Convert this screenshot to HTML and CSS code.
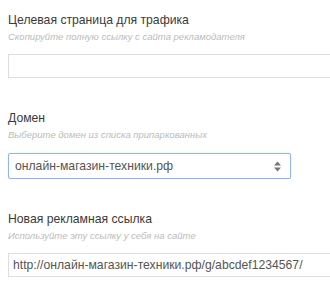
FILE: index.html
```html
<!DOCTYPE html>
<html lang="ru">
<head>
    <meta charset="UTF-8">
    <title>Новая рекламная ссылка</title>
    <link rel="stylesheet" href="styles.css">
</head>
<body>
    <div class="form">
        <div class="field">
            <p class="label">Целевая страница для трафика</p>
            <p class="hint">Скопируйте полную ссылку с сайта рекламодателя</p>
            <div class="input wide"></div>
        </div>
        <div class="field">
            <p class="label">Домен</p>
            <p class="hint">Выберите домен из списка припаркованных</p>
            <div class="select">
                <span>онлайн-магазин-техники.рф</span>
                <svg class="arrows" width="9" height="11" viewBox="0 0 9 11">
                    <path d="M4.5 0.5 L8 4.5 L1 4.5 Z" fill="#777"/>
                    <path d="M4.5 10.5 L8 6.5 L1 6.5 Z" fill="#777"/>
                </svg>
            </div>
        </div>
        <div class="field">
            <p class="label">Новая рекламная ссылка</p>
            <p class="hint">Используйте эту ссылку у себя на сайте</p>
            <div class="input wide">http://онлайн-магазин-техники.рф/g/abcdef1234567/</div>
        </div>
    </div>
</body>
</html>
```

FILE: styles.css
```css
html, body {
    margin: 0;
    background: #fff;
    overflow: hidden;
}
body {
    font-family: "Liberation Sans", Arial, sans-serif;
    color: #333;
}
.form {
    padding: 12px 0 0 8px;
}
.field {
    margin-bottom: 32px;
}
.field:last-child {
    margin-bottom: 0;
}
.label {
    margin: 0;
    font-size: 12.2px;
    line-height: 16px;
    color: #3a3a3a;
}
.hint {
    margin: 3px 0 0;
    font-size: 9.5px;
    line-height: 12px;
    font-style: italic;
    color: #bbb;
}
.input {
    box-sizing: border-box;
    margin-top: 11px;
    height: 24px;
    border: 1px solid #ddd;
    padding: 0 4px;
    font-size: 12.2px;
    line-height: 22px;
    color: #555;
    white-space: nowrap;
}
.input.wide {
    width: 322px;
    border-right: none;
}
.select {
    box-sizing: border-box;
    margin-top: 12px;
    width: 283px;
    height: 26px;
    border: 1px solid #8fb6ef;
    border-radius: 2px;
    box-shadow: 0 0 1px #a9c6f3;
    padding: 0 8px 0 6px;
    display: flex;
    align-items: center;
    justify-content: space-between;
    font-size: 12.2px;
    color: #555;
}
.arrows {
    display: block;
}
```
